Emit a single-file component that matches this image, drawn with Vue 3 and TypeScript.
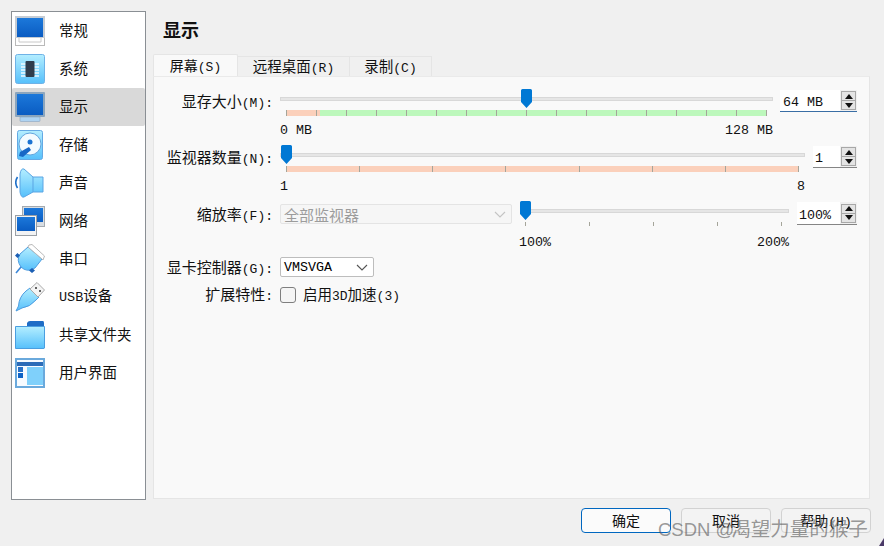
<script setup lang="ts">
interface Seg { cn?: string; lat?: string }
const nav: { key: string; label: Seg[]; active?: boolean }[] = [
  { key: 'general', label: [{ cn: '常规' }] },
  { key: 'system', label: [{ cn: '系统' }] },
  { key: 'display', label: [{ cn: '显示' }], active: true },
  { key: 'storage', label: [{ cn: '存储' }] },
  { key: 'audio', label: [{ cn: '声音' }] },
  { key: 'network', label: [{ cn: '网络' }] },
  { key: 'serial', label: [{ cn: '串口' }] },
  { key: 'usb', label: [{ lat: 'USB' }, { cn: '设备' }] },
  { key: 'shared', label: [{ cn: '共享文件夹' }] },
  { key: 'ui', label: [{ cn: '用户界面' }] },
]
const ticks = (n: number) => Array.from({ length: n }, (_, i) => i)
</script>

<template>
  <div class="window">
    <div class="main">
      <aside class="sidebar">
        <div v-for="item in nav" :key="item.key" class="nav-row" :class="{ active: item.active }">
          <svg class="nav-icon" width="30" height="30" viewBox="0 0 30 30">
            <defs>
              <linearGradient :id="'b-' + item.key" x1="0" y1="0" x2="0" y2="1">
                <stop offset="0" stop-color="#1c78da" />
                <stop offset="1" stop-color="#0a5cc2" />
              </linearGradient>
              <linearGradient :id="'c-' + item.key" x1="0" y1="0" x2="0" y2="1">
                <stop offset="0" stop-color="#b4eeff" />
                <stop offset="1" stop-color="#56c0fb" />
              </linearGradient>
            </defs>
            <template v-if="item.key === 'general'">
              <rect x="0.5" y="0.5" width="29" height="29" fill="#fff" stroke="#b9b9b9" />
              <rect x="0" y="0" width="30" height="22" fill="#c5ccd4" />
              <rect x="2" y="2" width="26" height="19" :fill="`url(#b-${item.key})`" />
              <path d="M4 22v4h22v-4" fill="none" stroke="#c8c8c8" />
            </template>
            <template v-else-if="item.key === 'system'">
              <rect x="0.5" y="0.5" width="29" height="29" rx="2" :fill="`url(#c-${item.key})`" stroke="#6fb2e6" />
              <path d="M6 10h18M6 13h18M6 16h18M6 19h18M6 22h18" stroke="#eefaff" stroke-width="1.5" />
              <rect x="10.5" y="7" width="9" height="16" rx="1" fill="#2f3c4c" />
            </template>
            <template v-else-if="item.key === 'display'">
              <rect x="0" y="0" width="30" height="25" rx="1" fill="#8ba5bd" />
              <rect x="2" y="2" width="26" height="21" :fill="`url(#b-${item.key})`" />
              <path d="M5 25h20v3.5a1 1 0 0 1-1 1H6a1 1 0 0 1-1-1z" fill="#aed3f2" stroke="#8ba5bd" stroke-width="0.6" />
            </template>
            <template v-else-if="item.key === 'storage'">
              <rect x="2.5" y="0.5" width="25" height="29" rx="2" :fill="`url(#c-${item.key})`" stroke="#64a9e4" />
              <circle cx="15" cy="14" r="11" fill="#f3fbff" stroke="#62a5dd" />
              <circle cx="15" cy="12" r="2.5" fill="#1a73d2" />
              <path d="M4 26 L5 22 L14 17 L16 20 L8 27 Z" fill="#1868c6" />
            </template>
            <template v-else-if="item.key === 'audio'">
              <path d="M5 6 Q6 0 9 1 L18 9 H28 V24 H18 L9 29 Q6 30 5 24 Z" :fill="`url(#c-${item.key})`" stroke="#5ba5e4" />
              <path d="M18 9V24" stroke="#5ba5e4" />
              <path d="M2.500 9q-3.500 5.500 0 11" fill="none" stroke="#1e6fc8" stroke-width="1.600" />
            </template>
            <template v-else-if="item.key === 'network'">
              <rect x="7.500" y="0.500" width="22" height="20" fill="#d8dde2" stroke="#a4aab0" />
              <rect x="9" y="2" width="19" height="14" :fill="`url(#b-${item.key})`" />
              <rect x="0.500" y="9.500" width="21" height="20" fill="#f2f3f4" stroke="#9aa0a6" />
              <rect x="2" y="11" width="18" height="14" :fill="`url(#b-${item.key})`" />
            </template>
            <template v-else-if="item.key === 'serial'">
              <path d="M13 3 L27 15 L20 24 Q12 29 6 23 Q1 16 5 10 Z" :fill="`url(#c-${item.key})`" stroke="#4d9ce0" />
              <path d="M14 1 L17 0.500 L29.500 12 L28 16 L27 15 L13 3 Z" fill="#fff" stroke="#b8b8b8" />
              <path d="M6 23 L1 29" stroke="#3b87d8" stroke-width="1.600" />
              <path d="M0 11.500 L2.500 9 L5 11.500 L2.500 14 Z M14 26.500 L17 24 L20 26.500 L17 29 Z" fill="#1c5fb4" />
            </template>
            <template v-else-if="item.key === 'usb'">
              <path d="M1 29 L3.500 24 Q4 15 11 9 L15 6 L24 15 L21 18 Q15 25 7 26 Z" :fill="`url(#c-${item.key})`" stroke="#4d9ce0" />
              <path d="M15 7 L22 0.500 L29.500 8 L23 15 Z" fill="#f4f4f4" stroke="#a9a9a9" />
              <path d="M20 6h2M24 9h2" stroke="#333" stroke-width="1.600" />
            </template>
            <template v-else-if="item.key === 'shared'">
              <path d="M12 3 Q13 1 15 1 L28 1 Q29 1 29 3 L29 7 L12 7 Z" fill="#1f6dc6" />
              <path d="M0.500 6.500 H29.500 V28 Q29.500 28.500 28 28.500 H0.500 Z" :fill="`url(#c-${item.key})`" stroke="#4a9ee0" />
            </template>
            <template v-else>
              <rect x="0" y="0" width="30" height="30" fill="#6aa9dc" />
              <rect x="2" y="2" width="26" height="26" fill="#f7fbff" />
              <rect x="2" y="4" width="26" height="4" fill="#2c6cb8" />
              <rect x="3" y="9" width="5" height="5" fill="#2a72c8" />
              <rect x="3" y="15" width="5" height="5" fill="#0f63c6" />
              <rect x="12" y="9" width="16" height="18" fill="#7fd0fb" />
            </template>
          </svg>
          <span class="nav-label">
            <template v-for="(s, i) in item.label" :key="i"><span v-if="s.lat" class="lat">{{ s.lat }}</span><template v-else>{{ s.cn }}</template></template>
          </span>
        </div>
      </aside>

      <section class="content">
        <h1 class="title">显示</h1>
        <div class="tabs">
          <div class="tab current">屏幕<span class="lat">(S)</span></div>
          <div class="tab t2">远程桌面<span class="lat">(R)</span></div>
          <div class="tab t3">录制<span class="lat">(C)</span></div>
        </div>
        <div class="panel">
          <!-- 显存大小 -->
          <div class="row">
            <div class="label">显存大小<span class="lat">(M):</span></div>
            <div class="slider grow">
              <div class="groove"><svg class="handle h1" width="11" height="19" viewBox="0 0 11 19"><path d="M1.500 0h8A1.500 1.500 0 0 1 11 1.500V13L5.500 19 0 13V1.500A1.500 1.500 0 0 1 1.500 0z" fill="#0078d4" /></svg></div>
              <div class="ticks memory">
                <i v-for="n in ticks(17)" :key="n"></i>
              </div>
              <div class="scale"><span>0 MB</span><span>128 MB</span></div>
            </div>
            <div class="spin focus s1">
              <span class="spin-value">64 MB</span>
              <div class="spin-btns"><b class="up"></b><b class="down"></b></div>
            </div>
          </div>
          <!-- 监视器数量 -->
          <div class="row">
            <div class="label">监视器数量<span class="lat">(N):</span></div>
            <div class="slider grow">
              <div class="groove"><svg class="handle h2" width="11" height="19" viewBox="0 0 11 19"><path d="M1.500 0h8A1.500 1.500 0 0 1 11 1.500V13L5.500 19 0 13V1.500A1.500 1.500 0 0 1 1.500 0z" fill="#0078d4" /></svg></div>
              <div class="ticks monitors">
                <i v-for="n in ticks(8)" :key="n"></i>
              </div>
              <div class="scale"><span>1</span><span>8</span></div>
            </div>
            <div class="spin s2">
              <span class="spin-value">1</span>
              <div class="spin-btns"><b class="up"></b><b class="down"></b></div>
            </div>
          </div>
          <!-- 缩放率 -->
          <div class="row r3">
            <div class="label">缩放率<span class="lat">(F):</span></div>
            <div class="combo disabled">
              <span>全部监视器</span>
              <svg width="12" height="7" viewBox="0 0 12 7"><path d="M1 1l5 5 5-5" fill="none" stroke="#c4c4c4" stroke-width="1.100" /></svg>
            </div>
            <div class="slider scaleslider">
              <div class="groove"><svg class="handle h3" width="11" height="19" viewBox="0 0 11 19"><path d="M1.500 0h8A1.500 1.500 0 0 1 11 1.500V13L5.500 19 0 13V1.500A1.500 1.500 0 0 1 1.500 0z" fill="#0078d4" /></svg></div>
              <div class="ticks plain">
                <i v-for="n in ticks(5)" :key="n"></i>
              </div>
              <div class="scale pct"><span>100%</span><span>200%</span></div>
            </div>
            <div class="spin s3">
              <span class="spin-value">100%</span>
              <div class="spin-btns"><b class="up"></b><b class="down"></b></div>
            </div>
          </div>
          <!-- 显卡控制器 -->
          <div class="row short">
            <div class="label">显卡控制器<span class="lat">(G):</span></div>
            <div class="combo vga">
              <span class="lat16">VMSVGA</span>
              <svg width="12" height="7" viewBox="0 0 12 7"><path d="M1 1l5 5 5-5" fill="none" stroke="#555" stroke-width="1.100" /></svg>
            </div>
          </div>
          <!-- 扩展特性 -->
          <div class="row check">
            <div class="label">扩展特性<span class="lat">:</span></div>
            <span class="box"></span>
            <span class="check-text">启用<span class="lat">3D</span>加速<span class="lat">(3)</span></span>
          </div>
        </div>
      </section>
    </div>

    <footer class="footer">
      <button class="btn primary">确定</button>
      <button class="btn">取消</button>
      <button class="btn">帮助<span class="lat">(H)</span></button>
    </footer>
    <div class="watermark">CSDN @<span class="wm-cn">渴望力量的猴子</span></div>
    <div class="corner"></div>
  </div>
</template>

<style>
html, body { margin: 0; padding: 0; background: #f0f0f0; }
</style>

<style scoped>
.window {
  position: relative;
  width: 884px;
  height: 546px;
  overflow: hidden;
  background: #f0f0f0;
  font-family: "Noto Sans CJK SC", "Liberation Sans", sans-serif;
  font-size: 14.5px;
  color: #111;
  box-sizing: border-box;
}
.lat { font-family: "Liberation Mono", "Noto Sans CJK SC", monospace; font-size: 13px; }
.main { display: flex; gap: 7px; padding: 11px 14px 0 11px; height: 489px; }
.sidebar {
  width: 133px; height: 487px; background: #fff; border: 1px solid #8a8f94;
  display: flex; flex-direction: column; flex: none;
}
.nav-row { height: 38px; display: flex; align-items: center; padding-left: 3px; flex: none; }
.nav-row.active { background: #d9d9d9; border-radius: 2px; }
.nav-icon { flex: none; }
.nav-label { margin-left: 14px; line-height: 20px; white-space: nowrap; padding-bottom: 2px; }
.nav-label .lat { font-size: 13.5px; }
.content { flex: 1; min-width: 0; display: flex; flex-direction: column; }
.title { margin: 0; height: 43px; padding: 6px 0 0 10px; box-sizing: border-box; font-size: 18px; line-height: 24px; font-weight: 700; }
.tabs { display: flex; align-items: flex-end; height: 22px; flex: none; }
.tab {
  height: 20px; box-sizing: border-box; background: #f0f0f0; border: 1px solid #e5e5e5; border-bottom: 0;
  line-height: 17px; text-align: center; font-size: 14.5px;
}
.tab.current { height: 22px; width: 85px; background: #f9f9f9; line-height: 20px; border-radius: 2px 2px 0 0; font-size: 14px; }
.t2 { width: 112px; border-left: 0; }
.t3 { width: 82px; border-left: 0; }
.panel {
  height: 423px; box-sizing: border-box; background: #f9f9f9; border: 1px solid #e5e5e5; border-top-color: #eaeaea;
  padding: 12px 12px 0 0;
  display: flex; flex-direction: column; gap: 7px;
}
.row { display: flex; height: 49px; flex: none; align-items: flex-start; }
.row.short { height: 20px; }
.row.check { height: 18px; margin-top: 2px; align-items: center; }
.label { width: 119px; flex: none; text-align: right; line-height: 24px; font-size: 15px; white-space: nowrap; margin-right: 7px; }
.r3 .label { line-height: 26px; }
.short .label { line-height: 20px; }
.check .label { line-height: 16px; }
.slider { display: flex; flex-direction: column; }
.grow { flex: 1; min-width: 0; }
.scaleslider { width: 269px; margin-left: 8px; flex: none; }
.groove {
  position: relative; height: 4px; margin-top: 8px; background: #e6e6e6; border: 1px solid #d8d8d8; box-sizing: border-box; flex: none;
}
.handle { position: absolute; top: -9px; display: block; }
.h1 { left: 240px; }
.h2 { left: 0; }
.h3 { left: -1px; }
.ticks {
  display: flex; justify-content: space-between; height: 6px; margin: 9px 6px 0; flex: none;
}
.ticks i { width: 1px; height: 100%; background: #a5a59a; display: block; }
.memory { background: linear-gradient(to right, #fbd0bb 0 34px, #bdf8bc 34px 100%); }
.monitors { background: #fbd0bb; }
.plain { height: 4px; margin: 9px 7px 2px 5px; }
.scale {
  display: flex; justify-content: space-between; margin-top: 7px; height: 16px; line-height: 16px;
  font-family: "Liberation Mono", monospace; font-size: 13.33px; color: #111;
}
.pct { margin-left: -1px; }
.spin {
  flex: none; height: 22px; margin-top: 1px; margin-left: 7px; box-sizing: border-box; background: #fff; border-bottom: 1px solid #858585;
  display: flex; align-items: center; justify-content: space-between;
  font-family: "Liberation Mono", monospace; font-size: 13.33px;
}
.spin.focus { border-bottom: 1px solid #3a6ea5; }
.s1 { width: 77px; }
.s2 { width: 44px; margin-left: 8px; }
.s3 { width: 60px; margin-left: 8px; height: 23px; }
.spin-value { padding: 4px 0 0 3px; }
.s2 .spin-value, .s3 .spin-value { padding-left: 2px; }
.s3 .spin-value { padding-top: 5px; }
.spin-btns { width: 17px; height: 100%; background: #f0f0f0; display: flex; flex-direction: column; align-items: center; justify-content: center; }
.spin-btns b {
  position: relative; display: block; width: 15px; height: 10px; box-sizing: border-box; background: #e4e4e4; border: 1px solid #a8a8a8;
}
.spin-btns b + b { margin-top: -1px; }
.spin-btns b::after {
  content: ""; position: absolute; left: 2.500px; top: 1.500px; border-left: 4px solid transparent; border-right: 4px solid transparent;
}
.up::after { border-bottom: 5px solid #111; }
.down::after { border-top: 5px solid #111; }
.combo {
  flex: none; height: 20px; box-sizing: border-box; display: flex; align-items: center; justify-content: space-between;
  border-radius: 2px; padding: 0 5px 0 3px;
}
.combo.disabled { width: 232px; margin-top: 3px; background: #f6f6f6; border: 1px solid #e4e4e4; color: #9c9c9c; font-size: 15px; }
.combo.vga { width: 94px; background: #fff; border: 1px solid #bdbdbd; }
.lat16 { font-family: "Liberation Mono", monospace; font-size: 13.33px; font-weight: 400; color: #000; }
.box { width: 16px; height: 16px; box-sizing: border-box; border: 1px solid #7f7f7f; border-radius: 3px; background: #f5f5f5; flex: none; }
.check-text { margin-left: 7px; font-size: 14.5px; line-height: 18px; white-space: nowrap; }
.footer { display: flex; justify-content: flex-end; gap: 10px; padding: 8px 13px 0 0; }
.btn {
  width: 90px; height: 25px; padding: 0; box-sizing: border-box; background: #f3f3f3; border: 1px solid #d2d2d2; border-radius: 4px;
  font-family: inherit; font-size: 14px; color: #111; line-height: 23px;
}
.btn.primary { background: #fbfbfb; border-color: #0067c0; }
.watermark {
  position: absolute; left: 658px; top: 514px; font-family: "Liberation Sans", "Noto Sans CJK SC", sans-serif; font-size: 18.5px; line-height: 28px;
  color: rgba(90, 90, 90, 0.62); white-space: nowrap;
}
.wm-cn { font-family: "Noto Sans CJK SC", sans-serif; font-size: 19.5px; margin-left: -3px; }
.corner {
  position: absolute; right: 0; bottom: 0; width: 5px; height: 8px;
  background: #4b3a68; clip-path: polygon(100% 0, 100% 100%, 0 100%);
}
</style>
